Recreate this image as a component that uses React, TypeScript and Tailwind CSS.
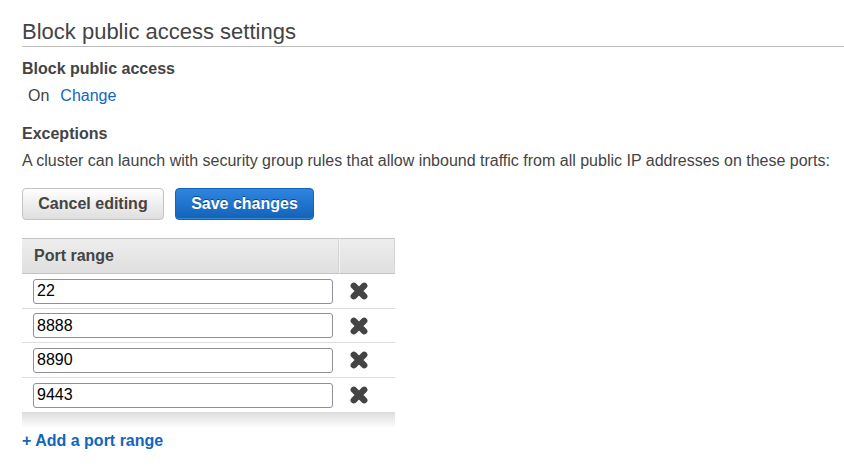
import { useState } from "react";

const initialPorts = ["22", "8888", "8890", "9443"];

function RemoveIcon() {
  return (
    <svg width="18" height="18" viewBox="0 0 18 18" aria-hidden="true">
      <path d="M3.8 3.8 14.2 14.2M14.2 3.8 3.8 14.2" stroke="#444" strokeWidth="6.4" strokeLinecap="round" />
    </svg>
  );
}

export default function App() {
  const [ports, setPorts] = useState(initialPorts);

  return (
    <main className="bg-white pt-[18px] pl-[22px] font-['Liberation_Sans',Arial,sans-serif] text-base leading-5 text-[#444]">
      <h1 className="border-b border-[#bbb] pb-px text-[22px] leading-[27px]">Block public access settings</h1>

      <section className="pt-3">
        <h2 className="font-bold">Block public access</h2>
        <p className="mt-[7px] flex gap-[11px] pl-[6px]">
          <span>On</span>
          <a href="#change" className="text-[#1166bb]">Change</a>
        </p>
      </section>

      <section className="pt-[18px]">
        <h2 className="font-bold">Exceptions</h2>
        <p className="mt-[7px] whitespace-nowrap">
          A cluster can launch with security group rules that allow inbound traffic from all public IP addresses on these ports:
        </p>

        <div className="mt-[17px] flex gap-[11px]">
          <button
            type="button"
            className="h-8 w-[142px] rounded-[4px] border border-[#c3c3c3] bg-linear-to-b from-white to-[#dedede] pb-px font-bold"
          >
            Cancel editing
          </button>
          <button
            type="button"
            className="h-8 w-[139px] rounded-[4px] border border-[#1563b4] bg-linear-to-b from-[#2f85df] to-[#1163b9] pb-px font-bold text-white shadow-[inset_0_-1px_0_#3b86d2] text-shadow-[0_-1px_0_#0b4684]"
          >
            Save changes
          </button>
        </div>

        <table className="mt-[18px] w-[373px] table-fixed border-separate border-spacing-0">
          <thead>
            <tr className="h-9 bg-linear-to-b from-[#eeeeee] to-[#dfdfdf]">
              <th id="port-range" scope="col" className="w-[317px] border-y border-r border-y-[#c3c3c3] border-r-[#d5d5d5] p-0 pl-3 text-left">
                Port range
              </th>
              <td className="border-y border-x border-y-[#c3c3c3] border-l-[#f3f3f3] border-r-[#d5d5d5] p-0" />
            </tr>
          </thead>
          <tbody>
            {ports.map((port, index) => (
              <tr key={index} className="group h-[35px] even:h-[34px] last:h-[33px]">
                <td className="border-b border-[#ddd] p-0 pl-[11px] group-last:border-b-0">
                  <input
                    type="text"
                    aria-labelledby="port-range"
                    value={port}
                    onChange={(event) =>
                      setPorts(ports.map((item, i) => (i === index ? event.target.value : item)))
                    }
                    className="block h-[25px] w-[300px] rounded-[3px] border border-[#8f8f9d] bg-white px-[3px] text-black"
                  />
                </td>
                <td className="border-b border-[#ddd] p-0 pl-[11px] group-last:border-b-0">
                  <button
                    type="button"
                    aria-label={`Remove port range ${port}`}
                    onClick={() => setPorts(ports.filter((_, i) => i !== index))}
                    className="block"
                  >
                    <RemoveIcon />
                  </button>
                </td>
              </tr>
            ))}
          </tbody>
        </table>
        <div className="h-4 w-[373px] bg-linear-to-b from-[#dcdcdc] to-white" />

        <button type="button" onClick={() => setPorts([...ports, ""])} className="mt-[3px] block font-bold text-[#1166bb]">
          + Add a port range
        </button>
      </section>
    </main>
  );
}
